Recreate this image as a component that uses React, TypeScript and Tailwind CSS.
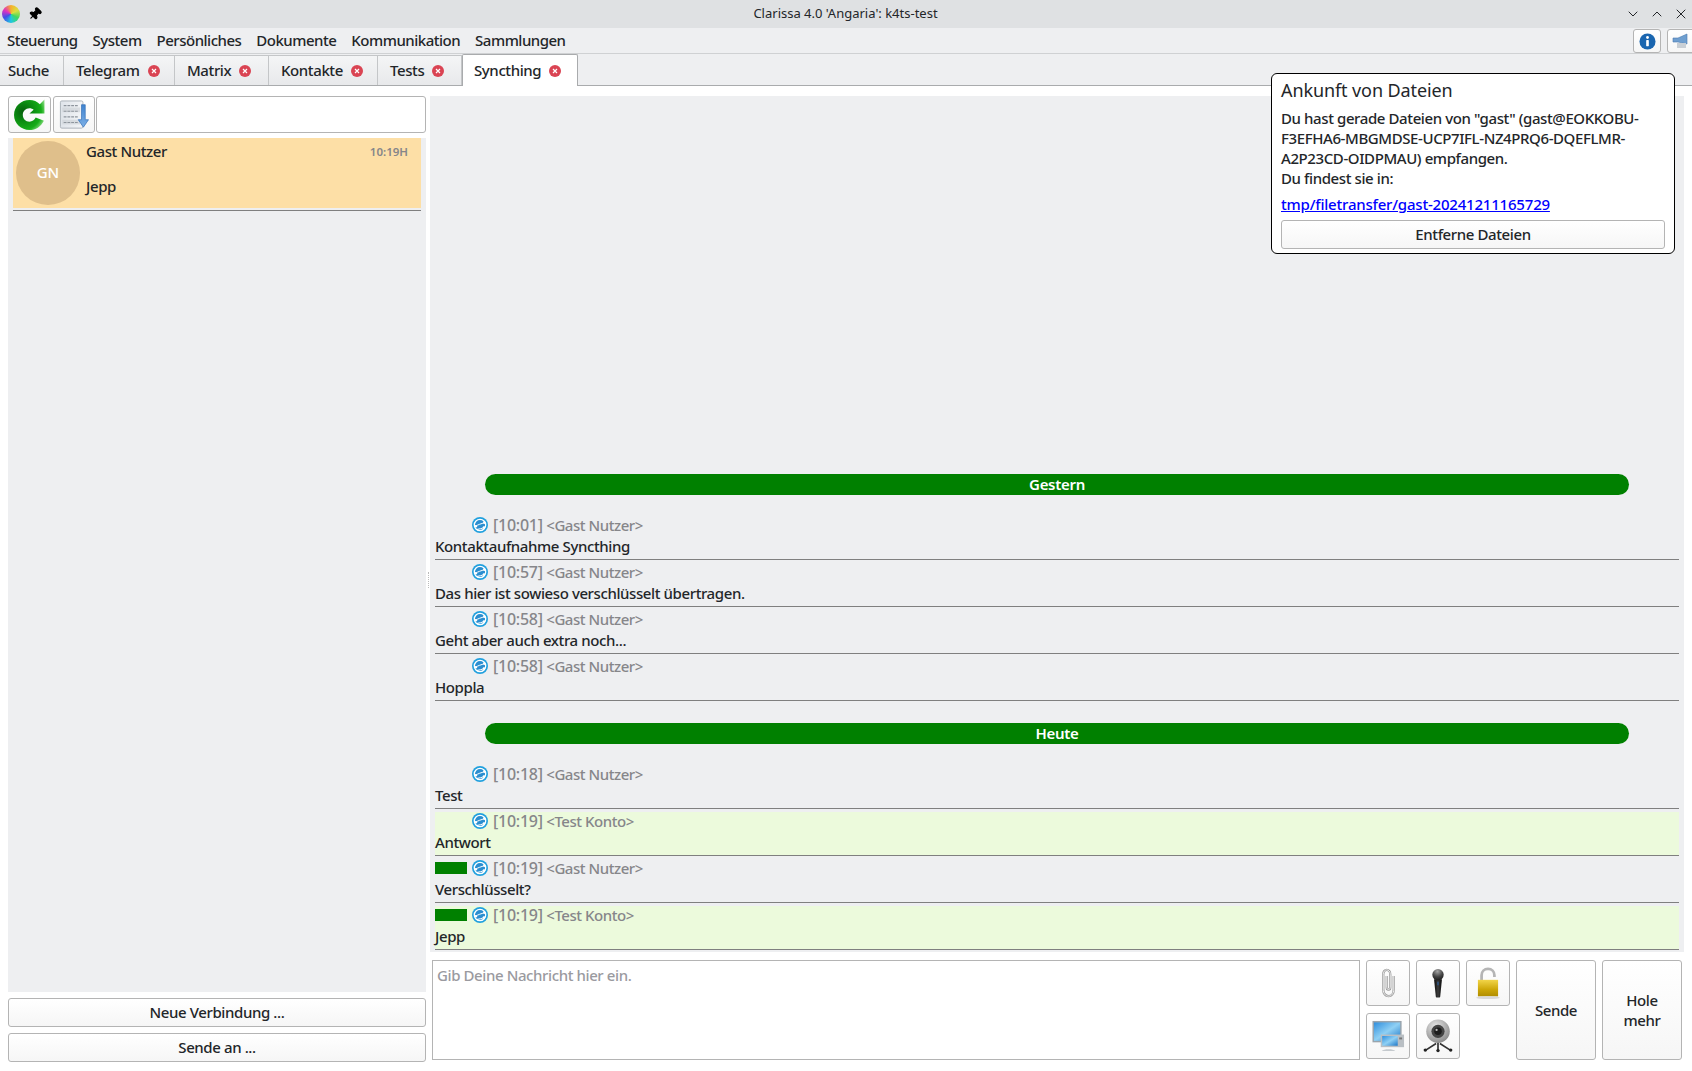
import React from "react";
import { ChevronDown, ChevronUp, X, Pin } from "lucide-react";

const FONT = "font-['Noto_Sans','Liberation_Sans',sans-serif]";

const menus = ["Steuerung", "System", "Persönliches", "Dokumente", "Kommunikation", "Sammlungen"];

const tabs = [
  { name: "Telegram", w: "w-[111px]" },
  { name: "Matrix", w: "w-[94px]" },
  { name: "Kontakte", w: "w-[109px]" },
  { name: "Tests", w: "w-[84px]" },
];

const CloseDot = () => (
  <svg viewBox="0 0 12 12" className="w-3 h-3 shrink-0">
    <circle cx="6" cy="6" r="6" fill="#da4453" />
    <path d="M4 4l4 4M8 4l-4 4" stroke="#fff" strokeWidth="1.2" />
  </svg>
);

const SyncIcon = () => (
  <svg viewBox="0 0 16 16" className="w-4 h-4 shrink-0">
    <circle cx="8" cy="8" r="8" fill="#21a0de" />
    <circle cx="8" cy="8" r="5.7" fill="#2b8ed0" stroke="#fff" strokeWidth="1.3" />
    <path d="M3.4 9.4C6 7.6 9 6.800 12.800 5.600M5 12.400c2.500-.4 5-.9 7.400-1.900" stroke="#fff" strokeWidth="1" fill="none" />
    <circle cx="3.800" cy="9.300" r="1.300" fill="#fff" />
    <circle cx="12.400" cy="5.600" r="1.300" fill="#fff" />
    <circle cx="12" cy="10.600" r="1.300" fill="#fff" />
  </svg>
);

const RefreshIcon = () => (
  <svg viewBox="0 0 32 32" className="w-[33px] h-[33px]">
    <defs>
      <radialGradient id="rf" cx="0.3" cy="0.4" r="0.85">
        <stop offset="0" stopColor="#075f0c" />
        <stop offset="0.35" stopColor="#0a8a10" />
        <stop offset="0.7" stopColor="#16ad18" />
        <stop offset="1" stopColor="#bdf0b0" />
      </radialGradient>
    </defs>
    <path
      d="M16 2C8 2 1 8 1 16.500S8 31 16 31c6 0 11-3.200 14-9l-8-3c-1.200 2.600-3.400 4-6 4-3.800 0-6.500-2.900-6.500-6.500S12.200 10 16 10c1.500 0 3 .5 4 1.500L16 15h14.500V1.500L26 6C23.500 3.500 20 2 16 2z"
      fill="url(#rf)"
    />
  </svg>
);

const ListDownIcon = () => (
  <svg viewBox="0 0 32 32" className="w-[30px] h-[30px]">
    <defs>
      <linearGradient id="ld" x1="0" y1="0" x2="1" y2="0">
        <stop offset="0" stopColor="#dfe4ea" />
        <stop offset="1" stopColor="#f3f5f7" />
      </linearGradient>
      <linearGradient id="la" x1="0" y1="0" x2="0" y2="1">
        <stop offset="0" stopColor="#3f83cf" />
        <stop offset="1" stopColor="#7db0e6" />
      </linearGradient>
    </defs>
    <rect x="1.500" y="1" width="24" height="29" rx="1.500" fill="url(#ld)" stroke="#a9b0b8" />
    <rect x="3.500" y="8" width="19" height="5" fill="#c9ced4" opacity="0.6" />
    <rect x="3.500" y="21" width="19" height="5" fill="#c9ced4" opacity="0.6" />
    <path d="M5 6h15M5 12h15M5 18h15M5 24h15" stroke="#8e959d" strokeWidth="1.200" strokeDasharray="3 1" />
    <path d="M24 5h4v16h3.500L26 29 20.500 21H24z" fill="url(#la)" stroke="#2f6db5" strokeWidth="0.700" />
  </svg>
);

const CLIP = "M18 9v15c0 5-2.500 8-6 8s-6-3-6-8V7c0-3 1.800-5 4-5s4 2 4 5v15c0 1.500-.8 2.500-2 2.500s-2-1-2-2.500V9";

const ClipIcon = () => (
  <svg viewBox="0 0 24 34" className="w-[21px] h-[30px]">
    <path d={CLIP} fill="none" stroke="#969696" strokeWidth="2.600" />
    <path d={CLIP} fill="none" stroke="#fafafa" strokeWidth="1" />
  </svg>
);

const MicIcon = () => (
  <svg viewBox="0 0 16 34" className="w-[14px] h-[31px]">
    <defs>
      <radialGradient id="mh" cx="0.45" cy="0.2" r="0.8">
        <stop offset="0" stopColor="#a5a5a5" />
        <stop offset="0.6" stopColor="#444" />
        <stop offset="1" stopColor="#1c1c1c" />
      </radialGradient>
      <linearGradient id="mb" x1="0" y1="0" x2="1" y2="0">
        <stop offset="0" stopColor="#0c0c0c" />
        <stop offset="0.5" stopColor="#3c3c3c" />
        <stop offset="1" stopColor="#0a0a0a" />
      </linearGradient>
    </defs>
    <path d="M3.500 12L5.500 32c.2 1.500 4.800 1.500 5 0L12.500 12z" fill="url(#mb)" />
    <circle cx="8" cy="7" r="6.500" fill="url(#mh)" />
    <rect x="7.500" y="15" width="1" height="4" fill="#2b6fc0" />
  </svg>
);

const LockIcon = () => (
  <svg viewBox="0 0 28 36" className="w-[26px] h-[33px]">
    <defs>
      <linearGradient id="lk" x1="0" y1="0" x2="0" y2="1">
        <stop offset="0" stopColor="#f2d54a" />
        <stop offset="0.6" stopColor="#cca506" />
        <stop offset="1" stopColor="#b08d00" />
      </linearGradient>
    </defs>
    <path d="M7 15V9c0-4 3-7 7-7s7 3 7 7v2" fill="none" stroke="#b5b5b5" strokeWidth="3" />
    <rect x="3" y="14" width="22" height="18" fill="url(#lk)" />
    <ellipse cx="14" cy="33.500" rx="13" ry="1.500" fill="#d8d8d8" />
  </svg>
);

const ScreenIcon = () => (
  <svg viewBox="0 0 34 34" className="w-[33px] h-[33px]">
    <defs>
      <linearGradient id="sc" x1="0" y1="0" x2="1" y2="1">
        <stop offset="0" stopColor="#2f8fde" />
        <stop offset="0.5" stopColor="#8fd0f4" />
        <stop offset="1" stopColor="#1f78c8" />
      </linearGradient>
    </defs>
    <rect x="0.500" y="1" width="30" height="22" fill="#9aa4ac" />
    <rect x="2" y="2.500" width="27" height="19" fill="url(#sc)" />
    <rect x="9" y="15" width="24" height="13" fill="#b9bfc4" />
    <rect x="10.500" y="16.500" width="16" height="10" fill="url(#sc)" />
    <rect x="28" y="18" width="3" height="2" fill="#777" />
    <path d="M10 32c2-2.500 12-2.500 14 0z" fill="#c4c9cd" />
  </svg>
);

const WebcamIcon = () => (
  <svg viewBox="0 0 34 36" className="w-[32px] h-[34px]">
    <defs>
      <radialGradient id="wc" cx="0.4" cy="0.3" r="0.8">
        <stop offset="0" stopColor="#e8e8e8" />
        <stop offset="1" stopColor="#808080" />
      </radialGradient>
    </defs>
    <path d="M17 24v9M15 26L4 33M19 26l11 7" stroke="#333" strokeWidth="1.800" fill="none" />
    <circle cx="3.500" cy="33" r="1.800" fill="#222" />
    <circle cx="17" cy="33.500" r="1.800" fill="#222" />
    <circle cx="30.500" cy="33" r="1.800" fill="#222" />
    <circle cx="17" cy="13" r="12.500" fill="url(#wc)" />
    <circle cx="17" cy="13" r="7" fill="#444" />
    <circle cx="17" cy="13" r="4" fill="#1d1d1d" />
    <circle cx="15.500" cy="11.500" r="1.200" fill="#bbb" />
  </svg>
);

const InfoIcon = () => (
  <svg viewBox="0 0 18 18" className="w-[17px] h-[17px]">
    <circle cx="9" cy="9" r="8.500" fill="#1a66b0" />
    <circle cx="9" cy="4.800" r="1.500" fill="#fff" />
    <rect x="7.600" y="7.500" width="2.800" height="6.500" rx="0.500" fill="#fff" />
  </svg>
);

const BroadcastIcon = () => (
  <svg viewBox="0 0 24 18" className="w-[24px] h-[18px] shrink-0 ml-[5px]">
    <path d="M1 6h5l9-4v10L6 10H1z" fill="#6f9fd0" stroke="#4a7bb0" strokeWidth="0.600" />
    <rect x="5" y="11" width="9" height="5" fill="#c9cfd5" />
  </svg>
);

const ActionBtn = ({ children, className }: { children: React.ReactNode; className: string }) => (
  <div className={`flex items-center justify-center rounded-[3px] border border-[#b4b4b4] bg-gradient-to-b from-white to-[#f6f6f6] ${className}`}>
    {children}
  </div>
);

interface Msg {
  time: string;
  from: string;
  text: string;
  mine?: boolean;
  enc?: boolean;
}

const MsgRow = ({ m }: { m: Msg }) => (
  <div className={`mx-[5px] mt-[3px] h-[44px] border-b border-[#7f7f7f] ${m.mine ? "bg-[#ecfadc]" : ""}`}>
    <div className="flex items-center h-[18px]">
      <div className="w-[37px] shrink-0">{m.enc && <div className="w-[32px] h-[12px] bg-[#008000]" />}</div>
      <SyncIcon />
      <span className="ml-[5px] text-[15px] font-medium text-[#86868a] tracking-[-0.45px] whitespace-nowrap">
        <span className="text-[16px] tracking-[-0.25px]">[{m.time}]</span> &lt;{m.from}&gt;
      </span>
    </div>
    <div className="mt-[2px] h-[21px] leading-[20px] text-[15px] font-medium tracking-[-0.4px] text-[#232629] whitespace-nowrap">{m.text}</div>
  </div>
);

const DayBar = ({ label }: { label: string }) => (
  <div className="mx-[55px] mt-[22px] mb-[18px] h-[21px] rounded-full bg-[#008000] text-center text-[15px] leading-[20px] font-semibold tracking-[-0.3px] text-white">
    {label}
  </div>
);

const yesterday: Msg[] = [
  { time: "10:01", from: "Gast Nutzer", text: "Kontaktaufnahme Syncthing" },
  { time: "10:57", from: "Gast Nutzer", text: "Das hier ist sowieso verschlüsselt übertragen." },
  { time: "10:58", from: "Gast Nutzer", text: "Geht aber auch extra noch..." },
  { time: "10:58", from: "Gast Nutzer", text: "Hoppla" },
];

const today: Msg[] = [
  { time: "10:18", from: "Gast Nutzer", text: "Test" },
  { time: "10:19", from: "Test Konto", text: "Antwort", mine: true },
  { time: "10:19", from: "Gast Nutzer", text: "Verschlüsselt?", enc: true },
  { time: "10:19", from: "Test Konto", text: "Jepp", mine: true, enc: true },
];

export default function App() {
  return (
    <div className={`${FONT} relative h-[1071px] w-full overflow-hidden bg-white text-[15px] text-[#232629] flex flex-col`}>
      {/* window title */}
      <div className="h-[28px] shrink-0 bg-[#dfe1e3] flex items-center pl-[2px] pr-[3px]">
        <div className="flex-1 flex items-center">
          <div className="w-[18px] h-[18px] rounded-full bg-[conic-gradient(#f6b02c,#d8e040,#40d860,#20c8e0,#4050e8,#e030c0,#f6b02c)]" />
          <Pin className="ml-[8px] w-[14px] h-[14px] rotate-45 text-black" fill="black" />
        </div>
        <div className="text-center text-[13px] text-[#232629]">Clarissa 4.0 'Angaria': k4ts-test</div>
        <div className="flex-1 flex items-center justify-end gap-[8px] text-[#232629]">
          <ChevronDown className="w-4 h-4" strokeWidth={1.5} />
          <ChevronUp className="w-4 h-4" strokeWidth={1.5} />
          <X className="w-4 h-4" strokeWidth={1.5} />
        </div>
      </div>

      {/* menu */}
      <div className="h-[26px] shrink-0 bg-[#eeeff1] border-b border-[#cfd1d3] flex items-center pl-[7px] relative">
        <div className="flex gap-[15px] font-medium tracking-[-0.5px]">
          {menus.map((m) => (
            <span key={m}>{m}</span>
          ))}
        </div>
        <div className="ml-auto flex gap-[6px] -mr-[3px] pt-[1px]">
          <ActionBtn className="w-[28px] h-[24px]">
            <InfoIcon />
          </ActionBtn>
          <ActionBtn className="w-[28px] h-[24px] overflow-hidden">
            <BroadcastIcon />
          </ActionBtn>
        </div>
      </div>

      {/* tabs */}
      <div className="h-[32px] shrink-0 bg-[#eeeff1] flex items-end border-b border-[#a9abad]">
        <div className="w-[64px] h-[30px] bg-gradient-to-b from-[#f4f5f6] to-[#e8e9eb] border-r border-t border-[#c4c6c8] flex items-center pl-[8px] font-medium tracking-[-0.4px]">
          Suche
        </div>
        {tabs.map((t) => (
          <div
            key={t.name}
            className={`${t.w} h-[30px] bg-gradient-to-b from-[#f4f5f6] to-[#e8e9eb] border-r border-t border-[#c4c6c8] flex items-center pl-[12px] gap-[8px] font-medium tracking-[-0.4px]`}
          >
            <span>{t.name}</span>
            <CloseDot />
          </div>
        ))}
        <div className="w-[116px] h-[32px] -mb-[1px] bg-white border-x border-t border-[#a9abad] rounded-t-[2px] flex items-center pl-[11px] gap-[8px] font-medium tracking-[-0.4px]">
          <span>Syncthing</span>
          <CloseDot />
        </div>
      </div>

      {/* body */}
      <div className="flex flex-1 min-h-0 pt-[10px] pb-[9px] pl-[8px] pr-[8px]">
        {/* left column */}
        <div className="w-[418px] shrink-0 flex flex-col">
          <div className="h-[37px] flex gap-[2px] shrink-0">
            <ActionBtn className="w-[43px] h-[37px]">
              <RefreshIcon />
            </ActionBtn>
            <ActionBtn className="w-[42px] h-[37px]">
              <ListDownIcon />
            </ActionBtn>
            <div className="flex-1 -ml-[1px] border border-[#b4b4b4] rounded-[3px] bg-white" />
          </div>
          <div className="mt-[5px] flex-1 min-h-0 bg-[#eeeff1]">
            <div className="mx-[5px] h-[70px] bg-[#fddfa6] flex">
              <div className="ml-[3px] mt-[3px] w-[64px] h-[64px] rounded-full bg-[#dfbf8b] flex items-center justify-center pb-[2px] text-white text-[15px] font-medium">
                GN
              </div>
              <div className="ml-[6px] flex-1 flex flex-col pt-[2px]">
                <div className="flex justify-between items-center pr-[13px]">
                  <span className="font-medium tracking-[-0.4px]">Gast Nutzer</span>
                  <span className="text-[11.5px] font-semibold text-[#86868a]">10:19H</span>
                </div>
                <div className="mt-[12px] font-medium tracking-[-0.4px]">Jepp</div>
              </div>
            </div>
            <div className="mx-[5px] mt-[2px] h-[1px] bg-[#7f7f7f]" />
          </div>
          <div className="mt-[6px] h-[29px] shrink-0 rounded-[3px] border border-[#b4b4b4] bg-gradient-to-b from-white to-[#f6f6f6] flex items-center justify-center font-medium tracking-[-0.4px]">
            Neue Verbindung ...
          </div>
          <div className="mt-[6px] h-[29px] shrink-0 rounded-[3px] border border-[#b4b4b4] bg-gradient-to-b from-white to-[#f6f6f6] flex items-center justify-center font-medium tracking-[-0.4px]">
            Sende an ...
          </div>
        </div>

        {/* splitter */}
        <div className="w-[4px] shrink-0 relative">
          <div className="absolute left-[2px] top-[476px] h-[16px] border-l border-dotted border-[#bbbbbb]" />
        </div>

        {/* chat */}
        <div className="flex-1 min-w-0 flex flex-col">
          <div className="h-[856px] shrink-0 bg-[#eeeff1] flex flex-col justify-end pb-[2px]">
            <DayBar label="Gestern" />
            {yesterday.map((m, i) => (
              <MsgRow key={i} m={m} />
            ))}
            <DayBar label="Heute" />
            {today.map((m, i) => (
              <MsgRow key={i} m={m} />
            ))}
          </div>
          <div className="mt-[8px] flex-1 min-h-0 flex pl-[2px] -mr-[1px]">
            <div className="w-[928px] h-[100px] border border-[#b4b4b4] bg-white px-[4px] pt-[3px] text-[#9a9a9f] font-medium tracking-[-0.4px]">
              Gib Deine Nachricht hier ein.
            </div>
            <div className="ml-[6px] grid grid-cols-[44px_44px_44px] grid-rows-[46px_46px] gap-x-[6px] gap-y-[7px]">
              <ActionBtn className="">
                <ClipIcon />
              </ActionBtn>
              <ActionBtn className="">
                <MicIcon />
              </ActionBtn>
              <ActionBtn className="">
                <LockIcon />
              </ActionBtn>
              <ActionBtn className="">
                <ScreenIcon />
              </ActionBtn>
              <ActionBtn className="">
                <WebcamIcon />
              </ActionBtn>
            </div>
            <ActionBtn className="ml-[6px] w-[80px] h-[100px] font-medium tracking-[-0.4px]">Sende</ActionBtn>
            <ActionBtn className="ml-[6px] w-[80px] h-[100px] font-medium tracking-[-0.4px] text-center leading-[20px]">
              Hole
              <br />
              mehr
            </ActionBtn>
          </div>
        </div>
      </div>

      {/* file arrival popup */}
      <div className="absolute left-[1271px] top-[73px] w-[404px] h-[181px] rounded-[6px] border border-black bg-white px-[9px] pt-[5px]">
        <div className="text-[18px] leading-[23px] tracking-[-0.1px]">Ankunft von Dateien</div>
        <div className="mt-[6px] text-[15px] leading-[20px] font-medium tracking-[-0.4px] whitespace-nowrap">
          Du hast gerade Dateien von "gast" (gast@EOKKOBU-
          <br />
          F3EFHA6-MBGMDSE-UCP7IFL-NZ4PRQ6-DQEFLMR-
          <br />
          A2P23CD-OIDPMAU) empfangen.
          <br />
          Du findest sie in:
        </div>
        <a className="block mt-[6px] text-[15px] leading-[20px] font-medium tracking-[-0.2px] text-[#0000ff] underline">tmp/filetransfer/gast-20241211165729</a>
        <div className="mt-[6px] h-[29px] rounded-[3px] border border-[#b4b4b4] bg-gradient-to-b from-white to-[#f6f6f6] flex items-center justify-center font-medium tracking-[-0.4px]">
          Entferne Dateien
        </div>
      </div>
    </div>
  );
}
